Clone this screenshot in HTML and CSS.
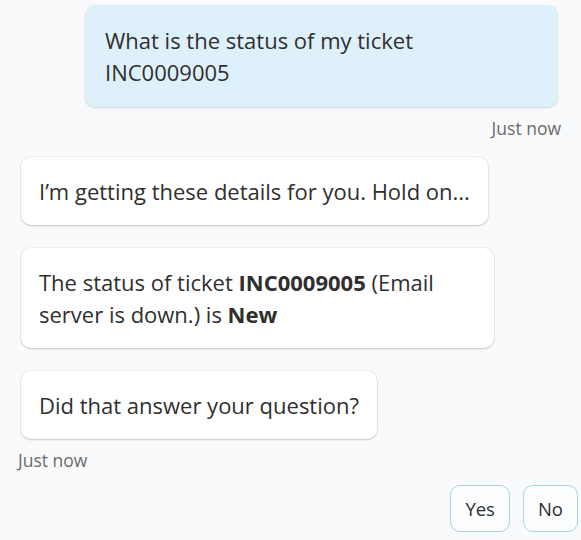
FILE: index.html
```html
<!DOCTYPE html>
<html>
<head>
<meta charset="utf-8">
<link rel="stylesheet" href="styles.css">
</head>
<body>
<div class="chat">
  <div class="row row-user">
    <div class="bubble bubble-user">What is the status of my ticket INC0009005</div>
    <div class="stamp stamp-right">Just now</div>
  </div>
  <div class="row row-bot">
    <div class="bubble bubble-bot">I’m getting these details for you. Hold on...</div>
    <div class="bubble bubble-bot">The status of ticket <b>INC0009005</b> (Email server is down.) is <b>New</b></div>
    <div class="bubble bubble-bot">Did that answer your question?</div>
    <div class="stamp stamp-left">Just now</div>
  </div>
  <div class="actions">
    <button class="choice">Yes</button>
    <button class="choice">No</button>
  </div>
</div>
</body>
</html>
```
FILE: styles.css
```css
html, body {
  margin: 0;
  padding: 0;
}
body {
  background: #f9fafc;
  font-family: "Open Sans", "Noto Sans", sans-serif;
  color: #2f2f2f;
  width: 581px;
  height: 540px;
  overflow: hidden;
}
.chat {
  display: flex;
  flex-direction: column;
  padding: 5px 23px 0 20px;
}
.row {
  display: flex;
  flex-direction: column;
}
.row-user {
  align-items: flex-end;
}
.row-bot {
  align-items: flex-start;
  gap: 23px;
  margin-top: 18px;
}
.bubble {
  box-sizing: border-box;
  max-width: 473px;
  font-size: 22px;
  line-height: 32px;
  padding: 18px 18px;
  border-radius: 10px;
}
.bubble b {
  font-weight: 700;
}
.bubble-user {
  background: #def0fa;
  width: 473px;
  padding: 19px 120px 19px 20px;
  box-shadow: 0 1px 2px rgba(0, 0, 0, 0.16);
}
.bubble-bot {
  background: #ffffff;
  margin-left: 1px;
  box-shadow: 0 0 0 1px rgba(0, 0, 0, 0.04), 0 1px 2px rgba(0, 0, 0, 0.18);
}
.stamp {
  font-size: 17.5px;
  color: #6b6b6b;
  line-height: 22px;
}
.stamp-right {
  margin-top: 10px;
  margin-right: -3px;
}
.stamp-left {
  margin-top: -13px;
  margin-left: -2px;
}
.actions {
  display: flex;
  justify-content: flex-end;
  gap: 13px;
  margin-top: 14px;
  margin-right: -20px;
}
.choice {
  font-family: inherit;
  font-size: 18.5px;
  color: #2f2f2f;
  background: #fbfdfe;
  border: 1px solid #a9d6e6;
  border-radius: 10px;
  height: 47px;
  padding: 0 14px;
  cursor: pointer;
}
```
